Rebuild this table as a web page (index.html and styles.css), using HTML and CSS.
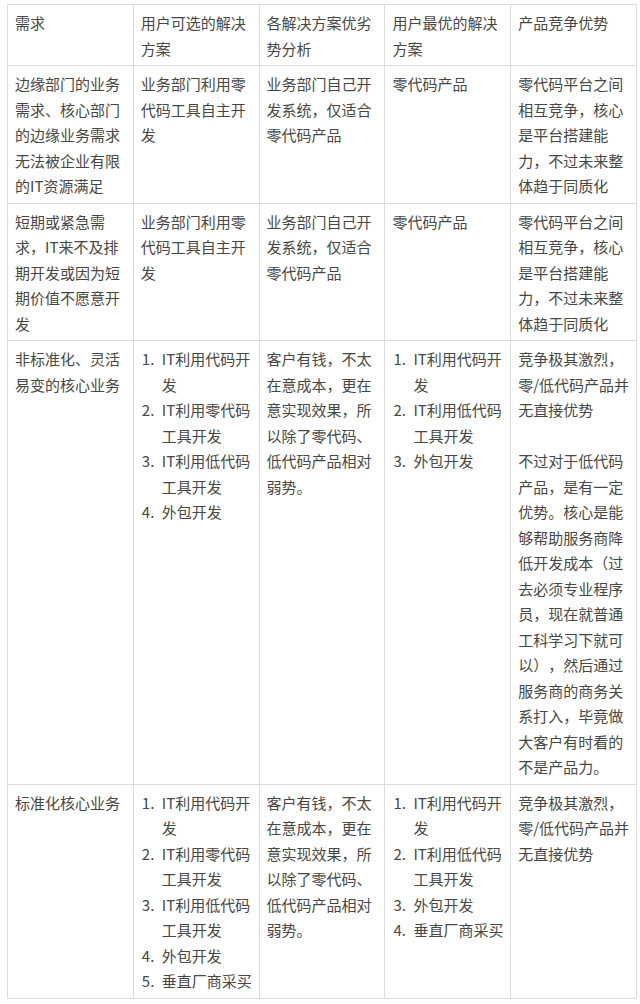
FILE: index.html
```html
<!DOCTYPE html>
<html lang="zh-CN">
<head>
<meta charset="utf-8">
<title>需求与解决方案</title>
<link rel="stylesheet" href="styles.css">
</head>
<body>
<div class="page">
<table class="grid">
  <thead>
    <tr>
      <th>需求</th>
      <th>用户可选的解决方案</th>
      <th>各解决方案优劣势分析</th>
      <th>用户最优的解决方案</th>
      <th>产品竞争优势</th>
    </tr>
  </thead>
  <tbody>
    <tr>
      <td>边缘部门的业务需求、核心部门的边缘业务需求无法被企业有限的IT资源满足</td>
      <td>业务部门利用零代码工具自主开发</td>
      <td>业务部门自己开发系统，仅适合零代码产品</td>
      <td>零代码产品</td>
      <td>零代码平台之间相互竞争，核心是平台搭建能力，不过未来整体趋于同质化</td>
    </tr>
    <tr>
      <td>短期或紧急需求，IT来不及排期开发或因为短期价值不愿意开发</td>
      <td>业务部门利用零代码工具自主开发</td>
      <td>业务部门自己开发系统，仅适合零代码产品</td>
      <td>零代码产品</td>
      <td>零代码平台之间相互竞争，核心是平台搭建能力，不过未来整体趋于同质化</td>
    </tr>
    <tr>
      <td>非标准化、灵活易变的核心业务</td>
      <td>
        <ol class="steps">
          <li>IT利用代码开发</li>
          <li>IT利用零代码工具开发</li>
          <li>IT利用低代码工具开发</li>
          <li>外包开发</li>
        </ol>
      </td>
      <td>客户有钱，不太在意成本，更在意实现效果，所以除了零代码、低代码产品相对弱势。</td>
      <td>
        <ol class="steps">
          <li>IT利用代码开发</li>
          <li>IT利用低代码工具开发</li>
          <li>外包开发</li>
        </ol>
      </td>
      <td>
        <p class="para">竞争极其激烈，零/低代码产品并无直接优势</p>
        <p class="para gap">不过对于低代码产品，是有一定优势。核心是能够帮助服务商降低开发成本（过去必须专业程序员，现在就普通工科学习下就可以），然后通过服务商的商务关系打入，毕竟做大客户有时看的不是产品力。</p>
      </td>
    </tr>
    <tr>
      <td>标准化核心业务</td>
      <td>
        <ol class="steps">
          <li>IT利用代码开发</li>
          <li>IT利用零代码工具开发</li>
          <li>IT利用低代码工具开发</li>
          <li>外包开发</li>
          <li>垂直厂商采买</li>
        </ol>
      </td>
      <td>客户有钱，不太在意成本，更在意实现效果，所以除了零代码、低代码产品相对弱势。</td>
      <td>
        <ol class="steps">
          <li>IT利用代码开发</li>
          <li>IT利用低代码工具开发</li>
          <li>外包开发</li>
          <li>垂直厂商采买</li>
        </ol>
      </td>
      <td>竞争极其激烈，零/低代码产品并无直接优势</td>
    </tr>
  </tbody>
</table>
</div>
</body>
</html>
```
FILE: styles.css
```css
html, body {
  margin: 0;
  padding: 0;
  background: #ffffff;
}

.page {
  padding: 4px 0 0 7px;
}

.grid {
  width: 630px;
  table-layout: fixed;
  border-collapse: collapse;
  font-family: "Noto Sans CJK SC", "Noto Sans", sans-serif;
  font-size: 15px;
  line-height: 25.5px;
  color: #474747;
  text-spacing-trim: space-all;
}

.grid th,
.grid td {
  border: 1px solid #dcdcdc;
  padding: 5px 4px 4px 7px;
  vertical-align: top;
  text-align: left;
  font-weight: normal;
  word-break: break-all;
}

.steps {
  margin: 0;
  padding-left: 21px;
}

.steps li::marker {
  content: counter(list-item) ".\2002";
}

.para {
  margin: 0;
}

.para.gap {
  margin-top: 25.5px;
}
```
